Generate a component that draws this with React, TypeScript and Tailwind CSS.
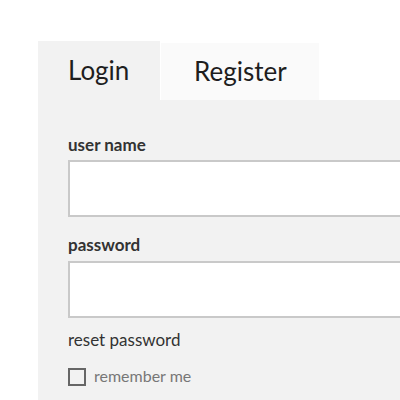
export default function App() {
  return (
    <div className="min-h-[400px] w-[400px] overflow-hidden bg-white font-['Lato',sans-serif]">
      <div className="ml-[38px] mt-[41px] w-[400px]">
        {/* tabs */}
        <div className="flex h-[59px] items-end">
          <div className="flex h-[59px] w-[122px] items-center bg-[#f2f2f2] pl-[30px] text-[26px] text-[#1e1e1e]">
            Login
          </div>
          <div className="ml-px flex h-[57px] w-[158px] items-center bg-[#fafafa] pl-[33px] text-[26px] text-[#1e1e1e]">
            Register
          </div>
        </div>

        {/* form */}
        <div className="h-[300px] bg-[#f2f2f2] pl-[30px] pt-[33px]">
          <label className="block text-[17px] font-bold leading-[24px] text-[#333]">user name</label>
          <input type="text" className="mt-[3px] block h-[57px] w-[340px] border-2 border-[#c9c9c9] bg-white outline-none" />

          <label className="mt-[16px] block text-[17px] font-bold leading-[24px] text-[#333]">password</label>
          <input type="password" className="mt-[4px] block h-[57px] w-[340px] border-2 border-[#c9c9c9] bg-white outline-none" />

          <div className="mt-[10px] text-[17px] leading-[24px] text-[#333]">reset password</div>

          <label className="mt-[13px] flex h-[22px] items-center">
            <span className="mt-[2px] block h-[18px] w-[18px] border-2 border-[#666] bg-transparent" />
            <span className="ml-[8px] text-[16px] leading-[22px] text-[#777]">remember me</span>
          </label>
        </div>
      </div>
    </div>
  )
}
